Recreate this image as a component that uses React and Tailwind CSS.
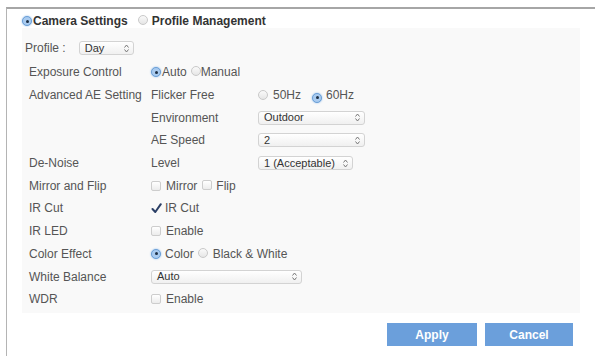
const Radio = ({ checked }) => (
  <span
    className={`inline-flex items-center justify-center w-[10px] h-[10px] rounded-full border shrink-0 ${
      checked
        ? "border-[#6b9fd6] bg-[#a9cbf0] shadow-[0_0_2px_#8ab8ea]"
        : "border-[#c9c9c9] bg-gradient-to-b from-[#fafafa] to-[#e6e6e6]"
    }`}
  >
    {checked && <span className="w-[3px] h-[3px] rounded-full bg-[#1d2f45]" />}
  </span>
);

const Checkbox = ({ checked }) =>
  checked ? (
    <svg width="11" height="11" viewBox="0 0 11 11" className="shrink-0">
      <path
        d="M1.5 6 L4.3 9 L9.8 1.2"
        fill="none"
        stroke="#2b3f66"
        strokeWidth="2"
        strokeLinecap="round"
        strokeLinejoin="round"
      />
    </svg>
  ) : (
    <span className="inline-block w-[10px] h-[10px] rounded-[2px] border border-[#cdcdcd] bg-gradient-to-b from-white to-[#ececec] shrink-0" />
  );

const Select = ({ value, className }) => (
  <div
    className={`flex items-center justify-between h-[14px] pl-[5px] pr-[4px] rounded-[3px] border border-[#d3d3d3] bg-gradient-to-b from-white to-[#f0f0f0] text-[11px] text-[#333] ${className}`}
  >
    <span className="leading-none">{value}</span>
    <svg width="5" height="9" viewBox="0 0 5 9">
      <path d="M0.5 3.5 L2.5 1 L4.5 3.5 M0.5 5.5 L2.5 8 L4.5 5.5" fill="none" stroke="#777" strokeWidth="1" />
    </svg>
  </div>
);

const Row = ({ label, children }) => (
  <div className="flex items-center h-[22.7px]">
    <div className="w-[122px] shrink-0">{label}</div>
    <div className="flex items-center">{children}</div>
  </div>
);

const SubRow = ({ label, children }) => (
  <div className="flex items-center">
    <div className="w-[107px] shrink-0">{label}</div>
    {children}
  </div>
);

export default function App() {
  return (
    <div
      className="w-[595px] h-[356px] bg-white overflow-hidden"
      style={{ fontFamily: '"Liberation Sans", Arial, sans-serif' }}
    >
      <div className="ml-[6px] mt-[7px] h-[349px] border-t-2 border-l border-t-[#a6a6a6] border-l-[#b4b4b4]">
        {/* tabs */}
        <div className="flex items-center h-[14px] mt-[5px] pl-[15px] text-[12px] font-bold text-[#333]">
          <Radio checked />
          <span className="ml-[1px]">Camera Settings</span>
          <span className="ml-[10px]">
            <Radio />
          </span>
          <span className="ml-[4px]">Profile Management</span>
        </div>

        {/* settings panel */}
        <div className="ml-[15px] w-[558px] h-[285px] bg-[#f9f9f9] pl-[7px] pt-[8px] text-[12px] text-[#555]">
          <div className="flex items-center h-[24px] mb-[1px]">
            <span className="-ml-[4px]">Profile :</span>
            <Select value="Day" className="ml-[13px] w-[55px]" />
          </div>

          <Row label="Exposure Control">
            <Radio checked />
            <span className="ml-[1px]">Auto</span>
            <span className="ml-[4px]">
              <Radio />
            </span>
            <span>Manual</span>
          </Row>

          <Row label="Advanced AE Setting">
            <SubRow label="Flicker Free">
              <Radio />
              <span className="ml-[5px]">50Hz</span>
              <span className="ml-[11px]">
                <Radio checked />
              </span>
              <span className="ml-[4px]">60Hz</span>
            </SubRow>
          </Row>
          <Row label="">
            <SubRow label="Environment">
              <Select value="Outdoor" className="w-[107px]" />
            </SubRow>
          </Row>
          <Row label="">
            <SubRow label="AE Speed">
              <Select value="2" className="w-[107px]" />
            </SubRow>
          </Row>
          <Row label="De-Noise">
            <SubRow label="Level">
              <Select value="1 (Acceptable)" className="w-[95px]" />
            </SubRow>
          </Row>

          <Row label="Mirror and Flip">
            <Checkbox />
            <span className="ml-[5px]">Mirror</span>
            <span className="ml-[5px]">
              <Checkbox />
            </span>
            <span className="ml-[4px]">Flip</span>
          </Row>
          <Row label="IR Cut">
            <Checkbox checked />
            <span className="ml-[3px]">IR Cut</span>
          </Row>
          <Row label="IR LED">
            <Checkbox />
            <span className="ml-[5px]">Enable</span>
          </Row>
          <Row label="Color Effect">
            <Radio checked />
            <span className="ml-[4px]">Color</span>
            <span className="ml-[4px]">
              <Radio />
            </span>
            <span className="ml-[5px]">Black &amp; White</span>
          </Row>
          <Row label="White Balance">
            <Select value="Auto" className="w-[151px]" />
          </Row>
          <Row label="WDR">
            <Checkbox />
            <span className="ml-[5px]">Enable</span>
          </Row>
        </div>

        {/* actions */}
        <div className="flex justify-end gap-[8px] pr-[22px] mt-[10px]">
          <button className="w-[90px] h-[23px] bg-[#6b9fdb] text-white text-[12px] font-bold">
            Apply
          </button>
          <button className="w-[88px] h-[23px] bg-[#6b9fdb] text-white text-[12px] font-bold">
            Cancel
          </button>
        </div>
      </div>
    </div>
  );
}
